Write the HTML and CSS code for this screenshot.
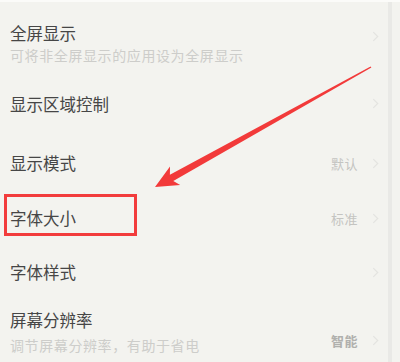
FILE: index.html
```html
<!DOCTYPE html>
<html lang="zh-CN">
<head>
<meta charset="utf-8">
<title>显示设置</title>
<link rel="stylesheet" href="styles.css">
</head>
<body>
<div class="screen">
  <div class="list">
    <div class="row row-1">
      <div class="text">
        <div class="title">全屏显示</div>
        <div class="sub">可将非全屏显示的应用设为全屏显示</div>
      </div>
      <div class="right"><svg class="chev" viewBox="0 0 8 12"><polyline points="1.5,1 6.5,6 1.5,11"/></svg></div>
    </div>
    <div class="row row-2">
      <div class="title">显示区域控制</div>
      <div class="right"><svg class="chev" viewBox="0 0 8 12"><polyline points="1.5,1 6.5,6 1.5,11"/></svg></div>
    </div>
    <div class="row row-3">
      <div class="title">显示模式</div>
      <div class="right"><span class="value">默认</span><svg class="chev" viewBox="0 0 8 12"><polyline points="1.5,1 6.5,6 1.5,11"/></svg></div>
    </div>
    <div class="row row-4">
      <div class="title">字体大小</div>
      <div class="right"><span class="value">标准</span><svg class="chev" viewBox="0 0 8 12"><polyline points="1.5,1 6.5,6 1.5,11"/></svg></div>
      <div class="highlight"></div>
    </div>
    <div class="row row-5">
      <div class="title">字体样式</div>
      <div class="right"><svg class="chev" viewBox="0 0 8 12"><polyline points="1.5,1 6.5,6 1.5,11"/></svg></div>
    </div>
    <div class="row row-6">
      <div class="text">
        <div class="title">屏幕分辨率</div>
        <div class="sub">调节屏幕分辨率，有助于省电</div>
      </div>
      <div class="right right-low"><span class="value strong">智能</span><svg class="chev" viewBox="0 0 8 12"><polyline points="1.5,1 6.5,6 1.5,11"/></svg></div>
    </div>
  </div>
  <div class="edge"></div>
  <svg class="arrow" viewBox="0 0 400 362" width="400" height="362">
    <polygon points="155,187 180.2,185 173.3,180.9 371.4,67.6 370.6,66.4 169.9,174.7 170,166.6"/>
  </svg>
</div>
</body>
</html>
```
FILE: styles.css
```css
* { box-sizing: border-box; }
html, body {
  margin: 0;
  padding: 0;
}
body {
  width: 400px;
  height: 362px;
  overflow: hidden;
  background: #f7f7f4;
  font-family: "Noto Sans CJK SC", "Noto Sans", sans-serif;
}
.screen {
  position: relative;
  width: 400px;
  height: 362px;
  background: #f3f3ef;
  border-top: 2px solid #fbfbf9;
  display: flex;
}
.list {
  width: 388px;
  display: flex;
  flex-direction: column;
  margin-top: -2px;
}
.edge {
  width: 4px;
  background: #e9e9e6;
}
.row {
  position: relative;
  display: flex;
  align-items: center;
  justify-content: space-between;
  padding-left: 10px;
  padding-right: 9px;
}
.title {
  font-size: 16.5px;
  line-height: 22px;
  color: #464646;
}
.sub {
  font-size: 14px;
  line-height: 18px;
  color: #cdcdca;
  white-space: nowrap;
  letter-spacing: 0.6px;
}
.row-1 {
  height: 75px;
  padding-top: 22px;
  padding-bottom: 11px;
  align-items: flex-start;
}
.row-1 .sub { margin-top: 2px; }
.row-1 .right { margin-top: 3px; }
.row-2 { height: 57px; }
.row-3 { height: 62px; }
.row-4 { height: 48px; }
.row-5 { height: 60px; }
.row-6 {
  height: 60px;
  padding-top: 7px;
  align-items: flex-start;
}
.row-6 .sub { margin-top: 5px; }
.right {
  display: flex;
  align-items: center;
  gap: 14px;
  height: 22px;
}
.right-low { margin-top: 20px; }
.value {
  font-size: 13px;
  color: #c4c4c1;
  letter-spacing: 0.5px;
}
.value.strong {
  color: #b0b0ad;
  font-weight: 700;
}
.chev {
  width: 7px;
  height: 11px;
}
.chev polyline {
  fill: none;
  stroke: #e3e3e0;
  stroke-width: 1.4;
}
.highlight {
  position: absolute;
  left: 4px;
  top: 0;
  width: 133px;
  height: 42px;
  border: 3px solid #f23c3c;
}
.arrow {
  position: absolute;
  left: 0;
  top: -2px;
  pointer-events: none;
}
.arrow polygon {
  fill: #f23a3a;
}
```
